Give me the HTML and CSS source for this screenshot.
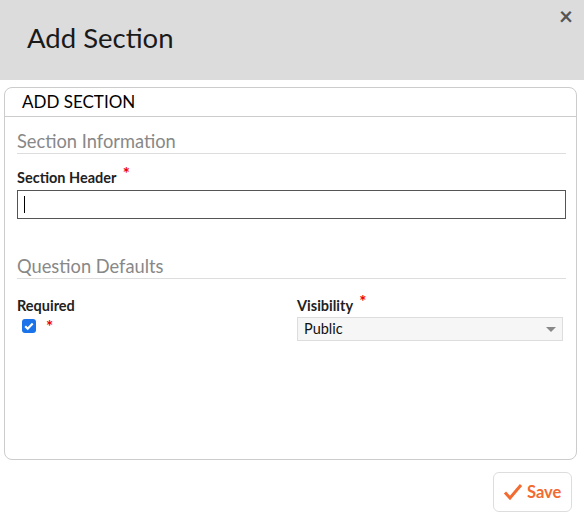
FILE: index.html
```html
<!DOCTYPE html>
<html lang="en">
<head>
    <meta charset="UTF-8">
    <title>Add Section</title>
    <link rel="stylesheet" href="styles.css">
</head>
<body>
    <div class="modal-header">
        <h1>Add Section</h1>
        <span class="close">&times;</span>
    </div>

    <div class="panel">
        <div class="panel-heading">ADD SECTION</div>
        <div class="panel-body">
            <h2 class="legend">Section Information</h2>
            <div class="form-group">
                <label class="label">Section Header <span class="req">*</span></label>
                <div class="text-input"><span class="caret"></span></div>
            </div>

            <h2 class="legend legend-2">Question Defaults</h2>
            <div class="row">
                <div class="col col-left">
                    <label class="label">Required</label>
                    <div class="check-line">
                        <span class="checkbox">
                            <svg width="14" height="14" viewBox="0 0 14 14"><path d="M3.2 7.2l2.5 2.5 5-5.2" fill="none" stroke="#fff" stroke-width="2.2"/></svg>
                        </span>
                        <span class="req">*</span>
                    </div>
                </div>
                <div class="col">
                    <label class="label">Visibility <span class="req">*</span></label>
                    <div class="select">
                        <span>Public</span>
                        <span class="arrow"></span>
                    </div>
                </div>
            </div>
        </div>
    </div>

    <div class="footer">
        <button class="btn-save">
            <svg width="20" height="18" viewBox="0 0 20 18"><path d="M2 9.5l5 5.5L18 2" fill="none" stroke="#f26b30" stroke-width="3"/></svg>
            Save
        </button>
    </div>
</body>
</html>
```

FILE: styles.css
```css
body {
    margin: 0;
    font-family: Lato, "Noto Sans", sans-serif;
    background-color: #fff;
    color: #222;
}
.modal-header {
    position: relative;
    background-color: #dcdcdc;
    height: 80px;
    box-sizing: border-box;
    padding: 21px 27px 0;
}
.modal-header h1 {
    margin: 0;
    font-size: 27.5px;
    font-weight: normal;
    line-height: 34px;
    color: #1a1a1a;
}
.close {
    position: absolute;
    top: 3px;
    right: 11px;
    font-size: 24px;
    font-weight: bold;
    color: #555;
    line-height: 26px;
}
.panel {
    margin: 7px 7px 0 4px;
    height: 373px;
    box-sizing: border-box;
    border: 1px solid #ccc;
    border-radius: 8px;
}
.panel-heading {
    padding: 3px 17px 0;
    height: 29px;
    box-sizing: border-box;
    border-bottom: 1px solid #ccc;
    font-size: 17px;
    color: #000;
}
.panel-body {
    padding: 13px 10px 0 12px;
}
.legend {
    margin: 0;
    font-size: 18.3px;
    font-weight: normal;
    color: #888;
    line-height: 22px;
    padding-bottom: 1px;
    border-bottom: 1px solid #ddd;
}
.legend-2 {
    margin-top: 36px;
}
.form-group {
    margin-top: 15px;
}
.label {
    display: block;
    font-size: 14.5px;
    font-weight: bold;
    color: #222;
    line-height: 18px;
}
.req {
    color: #e00;
    font-size: 17px;
    font-weight: bold;
    vertical-align: top;
    position: relative;
    top: -4px;
    margin-left: 3px;
}
.text-input {
    margin-top: 3px;
    height: 29px;
    box-sizing: border-box;
    border: 1px solid #555;
    padding: 5px 6px;
}
.caret {
    display: block;
    width: 1px;
    height: 17px;
    background-color: #000;
}
.row {
    display: flex;
    margin-top: 18px;
}
.col {
    flex: 1;
}
.col-left {
    flex: 0 0 280px;
}
.check-line {
    display: flex;
    align-items: flex-start;
    margin-top: 4px;
    padding-left: 5px;
}
.checkbox {
    width: 14px;
    height: 14px;
    background-color: #1a73e8;
    border-radius: 3px;
    display: flex;
}
.check-line .req {
    top: -3px;
    margin-left: 10px;
}
.select {
    position: relative;
    margin-top: 2px;
    height: 24px;
    box-sizing: border-box;
    border: 1px solid #ddd;
    background-color: #f6f6f6;
    font-size: 14.5px;
    line-height: 22px;
    padding: 0 6px;
    margin-right: 3px;
    color: #111;
}
.arrow {
    position: absolute;
    right: 6px;
    top: 9px;
    border-left: 5px solid transparent;
    border-right: 5px solid transparent;
    border-top: 5px solid #888;
}
.footer {
    display: flex;
    justify-content: flex-end;
    padding: 12px 12px 0 0;
}
.btn-save {
    display: flex;
    align-items: center;
    gap: 4px;
    height: 40px;
    padding: 0 9px;
    width: 79px;
    box-sizing: border-box;
    background-color: #fff;
    border: 1px solid #ddd;
    border-radius: 6px;
    font-family: Lato, sans-serif;
    font-size: 16.5px;
    font-weight: bold;
    color: #f26b30;
}
```
